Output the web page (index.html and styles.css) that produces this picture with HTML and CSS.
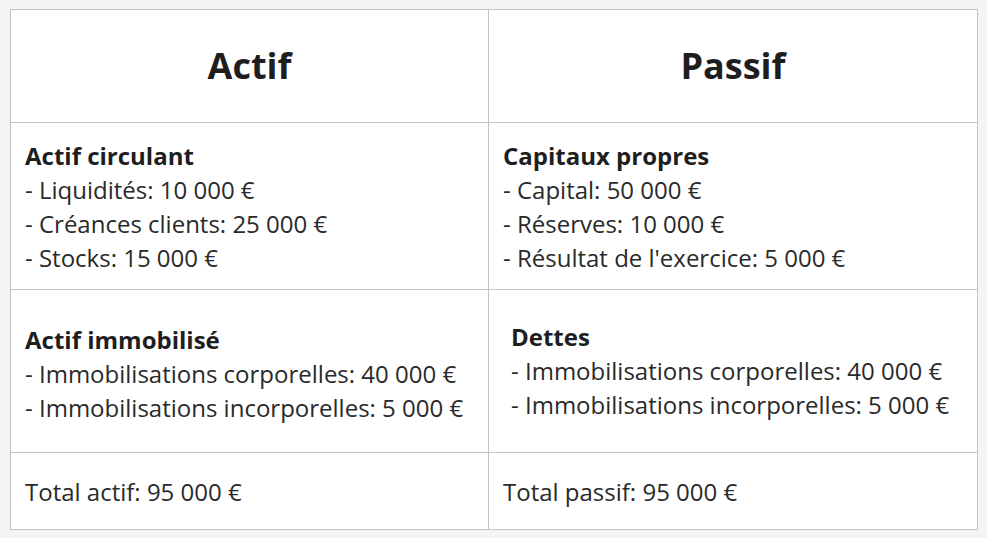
FILE: index.html
```html
<!DOCTYPE html>
<html lang="fr">
<head>
<meta charset="utf-8">
<title>Bilan</title>
<link rel="stylesheet" href="styles.css">
</head>
<body>
<table class="bilan">
  <colgroup>
    <col class="col-left">
    <col class="col-right">
  </colgroup>
  <thead>
    <tr>
      <th class="head">Actif</th>
      <th class="head">Passif</th>
    </tr>
  </thead>
  <tbody>
    <tr class="row-a">
      <td><strong>Actif circulant</strong><br>- Liquidités: 10 000 €<br>- Créances clients: 25 000 €<br>- Stocks: 15 000 €</td>
      <td><strong>Capitaux propres</strong><br>- Capital: 50 000 €<br>- Réserves: 10 000 €<br>- Résultat de l'exercice: 5 000 €</td>
    </tr>
    <tr class="row-b">
      <td class="shift-down"><strong>Actif immobilisé</strong><br>- Immobilisations corporelles: 40 000 €<br>- Immobilisations incorporelles: 5 000 €</td>
      <td class="indent"><strong>Dettes</strong><br>- Immobilisations corporelles: 40 000 €<br>- Immobilisations incorporelles: 5 000 €</td>
    </tr>
    <tr class="row-c">
      <td>Total actif: 95 000 €</td>
      <td>Total passif: 95 000 €</td>
    </tr>
  </tbody>
</table>
</body>
</html>
```

FILE: styles.css
```css
html, body {
  margin: 0;
  padding: 0;
  background: #f4f4f4;
}
body {
  padding: 9px 10px;
  font-family: "Open Sans", "Noto Sans", sans-serif;
  color: #222;
}
.bilan {
  border-collapse: collapse;
  width: 967px;
  table-layout: fixed;
  background: #fff;
  border: 1px solid #c4c4c4;
}
.col-left { width: 478px; }
.col-right { width: 489px; }
.bilan th, .bilan td {
  border: 1px solid #c4c4c4;
  vertical-align: middle;
  text-align: left;
  font-size: 24px;
  font-weight: 400;
  line-height: 34px;
  padding: 16px 14px 14px;
  color: #2a2a2a;
}
.bilan th.head {
  text-align: center;
  font-size: 36px;
  font-weight: 700;
  color: #1e1e1e;
  height: 113px;
  box-sizing: border-box;
  padding: 0 14px;
}
.bilan strong {
  font-weight: 700;
  color: #1e1e1e;
}
.row-a td {
  height: 167px;
  box-sizing: border-box;
}
.row-b td {
  height: 163px;
  box-sizing: border-box;
  padding-top: 29px;
  padding-bottom: 29px;
}
.row-b td.shift-down {
  padding-top: 32px;
  padding-bottom: 26px;
}
.row-b td.indent {
  padding-left: 22px;
}
.row-c td {
  height: 77px;
  box-sizing: border-box;
  padding-top: 21px;
  padding-bottom: 19px;
}
```
